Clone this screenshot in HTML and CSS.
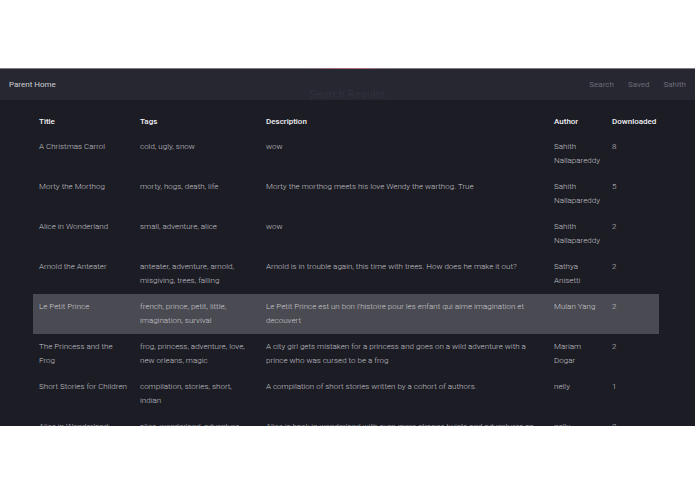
FILE: index.html
```html
<!DOCTYPE html>
<html>
<head>
<meta charset="utf-8">
<link rel="stylesheet" href="styles.css">
</head>
<body>
<div class="frame">
  <div class="topline"></div>
  <nav class="nav">
    <span class="brand">Parent Home</span>
    <div class="links">
      <span>Search</span>
      <span>Saved</span>
      <span>Sahith</span>
    </div>
  </nav>
  <div class="page-title">Search Results</div>
  <div class="content">
    <table class="results">
      <colgroup>
        <col class="c-title"><col class="c-tags"><col class="c-desc"><col class="c-author"><col class="c-dl">
      </colgroup>
      <thead>
        <tr><th>Title</th><th>Tags</th><th>Description</th><th>Author</th><th>Downloaded</th></tr>
      </thead>
      <tbody>
        <tr><td>A Christmas Carrol</td><td>cold, ugly, snow</td><td>wow</td><td>Sahith Nallapareddy</td><td>8</td></tr>
        <tr><td>Morty the Morthog</td><td>morty, hogs, death, life</td><td>Morty the morthog meets his love Wendy the warthog. True</td><td>Sahith Nallapareddy</td><td>5</td></tr>
        <tr><td>Alice in Wonderland</td><td>small, adventure, alice</td><td>wow</td><td>Sahith Nallapareddy</td><td>2</td></tr>
        <tr><td>Arnold the Anteater</td><td>anteater, adventure, arnold, misgiving, trees, falling</td><td>Arnold is in trouble again, this time with trees. How does he make it out?</td><td>Sathya Anisetti</td><td>2</td></tr>
        <tr class="active"><td>Le Petit Prince</td><td>french, prince, petit, little, imagination, survival</td><td>Le Petit Prince est un bon l'histoire pour les enfant qui aime imagination et decouvert</td><td>Mulan Yang</td><td>2</td></tr>
        <tr><td>The Princess and the Frog</td><td>frog, princess, adventure, love, new orleans, magic</td><td>A city girl gets mistaken for a princess and goes on a wild adventure with a prince who was cursed to be a frog</td><td>Mariam Dogar</td><td>2</td></tr>
        <tr><td>Short Stories for Children</td><td>compilation, stories, short, indian</td><td>A compilation of short stories written by a cohort of authors.</td><td>nelly</td><td>1</td></tr>
        <tr><td>Alice in Wonderland:</td><td>alice, wonderland, adventure, return</td><td>Alice is back in wonderland with even more strange twists and adventures as she returns</td><td>nelly</td><td>0</td></tr>
      </tbody>
    </table>
  </div>
</div>
</body>
</html>
```

FILE: styles.css
```css
html, body {
  margin: 0;
  padding: 0;
  background: #ffffff;
}
body {
  font-family: Roboto, "Liberation Sans", sans-serif;
}
.frame {
  margin-top: 68px;
  height: 358px;
  background: #1c1c24;
  overflow: hidden;
  position: relative;
}
.topline {
  height: 1px;
  background: linear-gradient(90deg, #7c7c84 0%, #7c7c84 43%, #a26f7b 48%, #a8707c 52%, #7c7c84 57%, #7c7c84 100%);
}
.nav {
  height: 31px;
  background: #262731;
  display: flex;
  align-items: center;
  justify-content: space-between;
  padding: 0 9px;
  font-size: 8px;
}
.brand {
  color: #cfcfd5;
}
.links {
  display: flex;
  gap: 14px;
  color: #6a6b75;
}
.page-title {
  position: absolute;
  left: 0;
  right: 0;
  top: 19px;
  text-align: center;
  font-size: 11.5px;
  color: #30313b;
}
.content {
  padding: 9px 36px 0 33px;
}
.results {
  width: 626px;
  table-layout: fixed;
  border-collapse: collapse;
  font-size: 8px;
  line-height: 14px;
}
.c-title { width: 101px; }
.c-tags { width: 126px; }
.c-desc { width: 288px; }
.c-author { width: 58px; }
.c-dl { width: 53px; }
.results th {
  text-align: left;
  font-weight: 500;
  color: #f0f0f4;
  padding: 6px 6px 5px;
  vertical-align: top;
}
.results td {
  color: #c2c2ca;
  font-weight: 300;
  padding: 6px 6px;
  vertical-align: top;
}
.results tr.active td {
  background: #4a4a52;
  color: #cacad0;
}
```
